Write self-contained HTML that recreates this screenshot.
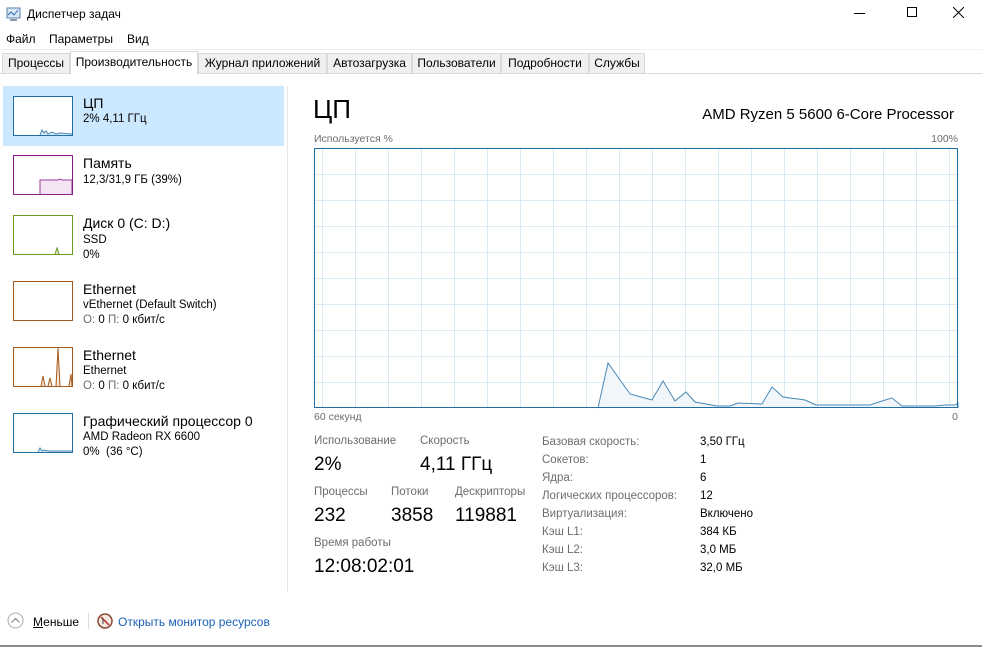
<!DOCTYPE html>
<html><head><meta charset="utf-8"><style>
*{margin:0;padding:0;box-sizing:border-box}
body{width:982px;height:647px;background:#fff;font-family:"Liberation Sans",sans-serif;color:#000;position:relative;overflow:hidden}
.a{position:absolute;white-space:nowrap}
.t{font-size:12px}
.g{color:#6d6d6d}
.tab{position:absolute;top:53px;height:20px;border:1px solid #d9d9d9;border-bottom:none;background:#f0f0f0;font-size:12px;line-height:18px;text-align:center}
.thumb{position:absolute;left:13px;width:60px;height:40px;background:#fff;border:1px solid}
.n1{font-size:14px}
.n2{font-size:11.5px}
.lab{font-size:11.5px;color:#6d6d6d}
.big{font-size:19px}
</style></head><body>
<svg class="a" style="left:6px;top:6px" width="16" height="16" viewBox="0 0 16 16"><rect x="1" y="2" width="13" height="10" fill="#dbe9f7" stroke="#5a7fa8"/><polyline points="2,9 5,6 8,9 12,4" fill="none" stroke="#2d6cb5"/><rect x="4" y="13" width="7" height="2" fill="#8a9bb0"/></svg>
<div class="a t" style="left:27px;top:7px">Диспетчер задач</div>
<div class="a" style="left:854px;top:13px;width:11px;height:1px;background:#000"></div>
<div class="a" style="left:907px;top:7px;width:10px;height:10px;border:1px solid #000"></div>
<svg class="a" style="left:953px;top:7px" width="11" height="11"><path d="M0 0L11 11M11 0L0 11" stroke="#000" stroke-width="1"/></svg>
<div class="a t" style="left:6px;top:32px">Файл</div>
<div class="a t" style="left:49px;top:32px">Параметры</div>
<div class="a t" style="left:127px;top:32px">Вид</div>
<div class="a" style="left:0;top:49px;width:982px;height:1px;background:#f0f0f0"></div>
<div class="a" style="left:0;top:73px;width:982px;height:1px;background:#d9d9d9"></div>
<div class="tab" style="left:2px;width:68px">Процессы</div>
<div class="tab" style="left:70px;top:51px;height:23px;width:128px;background:#fff;line-height:20px">Производительность</div>
<div class="tab" style="left:198px;width:129px">Журнал приложений</div>
<div class="tab" style="left:327px;width:85px">Автозагрузка</div>
<div class="tab" style="left:412px;width:89px">Пользователи</div>
<div class="tab" style="left:501px;width:88px">Подробности</div>
<div class="tab" style="left:589px;width:56px">Службы</div>
<div class="a" style="left:3px;top:86px;width:281px;height:60px;background:#cce8ff"></div>
<div class="a" style="left:287px;top:86px;width:1px;height:506px;background:#e6e6e6"></div>
<div class="thumb" style="top:96px;border-color:#1f6fa6"><svg width="58" height="38"><polyline points="26,38 28,33 30,36 32,34 34,37 38,35 42,37 46,36 58,37 58,38" fill="#dcebf5" stroke="#4a8ab5" stroke-width="1"/></svg></div>
<div class="a n1" style="left:83px;top:95px">ЦП</div>
<div class="a n2" style="left:83px;top:113px">2% 4,11 ГГц</div>
<div class="thumb" style="top:155px;border-color:#8b1a8b"><svg width="58" height="38"><polyline points="26,38 26,24 44,24 46,23 48,24 58,24 58,38" fill="#f4e4f4" stroke="#9b3c9b"/></svg></div>
<div class="a n1" style="left:83px;top:155px">Память</div>
<div class="a n2" style="left:83px;top:174px">12,3/31,9 ГБ (39%)</div>
<div class="thumb" style="top:215px;border-color:#6a9a1f"><svg width="58" height="38"><polyline points="41,38 43,32 45,38" fill="#dbeac4" stroke="#6a9a1f"/></svg></div>
<div class="a n1" style="left:83px;top:215px">Диск 0 (C: D:)</div>
<div class="a n2" style="left:83px;top:234px">SSD</div>
<div class="a n2" style="left:83px;top:249px">0%</div>
<div class="thumb" style="top:281px;border-color:#a7591b"></div>
<div class="a n1" style="left:83px;top:281px">Ethernet</div>
<div class="a n2" style="left:83px;top:299px">vEthernet (Default Switch)</div>
<div class="a n2" style="left:83px;top:314px"><span class="g">О:</span> 0 <span class="g">П:</span> 0 кбит/с</div>
<div class="thumb" style="top:347px;border-color:#a7591b"><svg width="58" height="38"><path d="M27 38L29 28L31 38M34 38L36 30L38 38M42 38L44 0L46 38M55 38L57 26L58 38" fill="#f3e2d2" stroke="#a7591b"/></svg></div>
<div class="a n1" style="left:83px;top:347px">Ethernet</div>
<div class="a n2" style="left:83px;top:365px">Ethernet</div>
<div class="a n2" style="left:83px;top:380px"><span class="g">О:</span> 0 <span class="g">П:</span> 0 кбит/с</div>
<div class="thumb" style="top:413px;border-color:#1f6fa6"><svg width="58" height="38"><polyline points="24,38 26,34 28,37 30,36 34,37 58,37 58,38" fill="#dcebf5" stroke="#4a8ab5"/></svg></div>
<div class="a n1" style="left:83px;top:413px">Графический процессор 0</div>
<div class="a n2" style="left:83px;top:431px">AMD Radeon RX 6600</div>
<div class="a n2" style="left:83px;top:446px">0% &nbsp;(36 °C)</div>
<div class="a" style="left:313px;top:94px;font-size:26px">ЦП</div>
<div class="a" style="right:28px;top:106px;font-size:15px">AMD Ryzen 5 5600 6-Core Processor</div>
<div class="a lab" style="left:314px;top:133px;font-size:10.5px">Используется %</div>
<div class="a lab" style="right:24px;top:133px;font-size:10.5px">100%</div>
<svg class="a" style="left:314px;top:148px" width="645" height="261" viewBox="314 148 645 261">
<g stroke="#d9eaf4" stroke-width="1">
<path d="M322.5 148V408M355.5 148V408M388.5 148V408M421.5 148V408M454.5 148V408M487.5 148V408M520.5 148V408M553.5 148V408M586.5 148V408M619.5 148V408M652.5 148V408M685.5 148V408M718.5 148V408M751.5 148V408M784.5 148V408M817.5 148V408M850.5 148V408M883.5 148V408M916.5 148V408M949.5 148V408"/>
<path d="M314 174.5H958M314 200.5H958M314 226.5H958M314 252.5H958M314 278.5H958M314 304.5H958M314 330.5H958M314 356.5H958M314 382.5H958"/>
</g>
<polyline points="598,408 608,363 630,394 652,400 663,381 675,401 686,392 695,402 717,406 730,406 738,403 762,404 772,387 783,397 805,400 816,405 850,405 870,405 882,401 892,398 902,406 935,406 945,405 955,405 958,403 958,408" fill="#f1f6fb" stroke="#4a8ab5" stroke-width="1"/>
<rect x="314.5" y="148.5" width="643" height="259" fill="none" stroke="#1f6fa6"/>
</svg>
<div class="a lab" style="left:314px;top:411px;font-size:10.5px">60 секунд</div>
<div class="a lab" style="right:24px;top:411px;font-size:10.5px">0</div>
<div class="a lab" style="left:314px;top:435px">Использование</div>
<div class="a lab" style="left:420px;top:435px">Скорость</div>
<div class="a big" style="left:314px;top:454px">2%</div>
<div class="a big" style="left:420px;top:454px">4,11 ГГц</div>
<div class="a lab" style="left:314px;top:486px">Процессы</div>
<div class="a lab" style="left:391px;top:486px">Потоки</div>
<div class="a lab" style="left:455px;top:486px">Дескрипторы</div>
<div class="a big" style="left:314px;top:505px">232</div>
<div class="a big" style="left:391px;top:505px">3858</div>
<div class="a big" style="left:455px;top:505px">119881</div>
<div class="a lab" style="left:314px;top:537px">Время работы</div>
<div class="a big" style="left:314px;top:556px">12:08:02:01</div>
<div class="a lab" style="left:542px;top:433px;line-height:18px">Базовая скорость:<br>Сокетов:<br>Ядра:<br>Логических процессоров:<br>Виртуализация:<br>Кэш L1:<br>Кэш L2:<br>Кэш L3:</div>
<div class="a" style="left:700px;top:433px;line-height:18px;font-size:11.5px">3,50 ГГц<br>1<br>6<br>12<br>Включено<br>384 КБ<br>3,0 МБ<br>32,0 МБ</div>
<svg class="a" style="left:7px;top:612px" width="17" height="17"><circle cx="8.5" cy="8.5" r="7.5" fill="#fff" stroke="#aaa"/><path d="M4.5 10.5L8.5 6.5L12.5 10.5" fill="none" stroke="#888" stroke-width="1.2"/></svg>
<div class="a t" style="left:33px;top:615px"><u>М</u>еньше</div>
<div class="a" style="left:88px;top:613px;width:1px;height:16px;background:#ddd"></div>
<svg class="a" style="left:97px;top:613px" width="16" height="16"><circle cx="8" cy="8" r="7" fill="#f5e9e0" stroke="#8a4a3a" stroke-width="1.5"/><path d="M4 4L12 12" stroke="#c0282a" stroke-width="1.5"/><path d="M6 5V11" stroke="#444"/></svg>
<div class="a t" style="left:118px;top:615px;color:#1a5fb4">Открыть монитор ресурсов</div>
<div class="a" style="left:0;top:645px;width:982px;height:2px;background:#8a8a8a"></div>
</body></html>
